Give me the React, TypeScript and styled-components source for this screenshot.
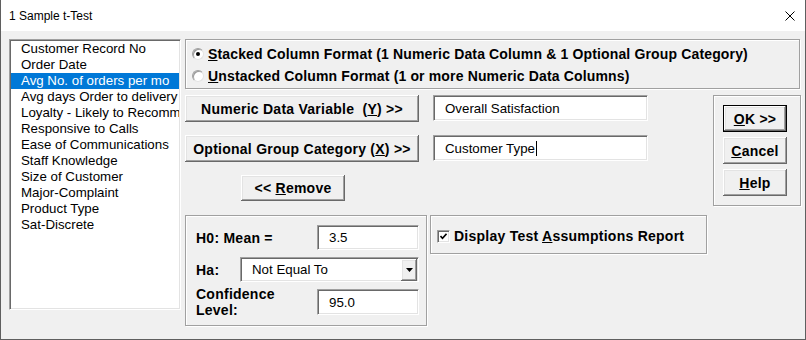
import React from "react";
import styled, { createGlobalStyle } from "styled-components";

const GlobalStyle = createGlobalStyle`
  html, body { margin: 0; padding: 0; background: #f0f0f0; }
  body { font-family: "Liberation Sans", Arial, sans-serif; color: #000; }
  * { box-sizing: border-box; }
`;

const Window = styled.div`
  width: 806px;
  height: 340px;
  display: flex;
  flex-direction: column;
  background: #f0f0f0;
  border: 1px solid #5f5f5f;
  border-top: none;
  overflow: hidden;
`;

const TitleBar = styled.div`
  flex: none;
  height: 31px;
  background: #fff;
  display: flex;
  align-items: center;
  justify-content: space-between;
  padding-left: 8px;
  font-size: 12px;
`;

const CloseBox = styled.div`
  width: 30px;
  height: 31px;
  display: flex;
  align-items: center;
  justify-content: center;
`;

const Body = styled.div`
  flex: 1;
  display: flex;
  padding: 8px 0 0 8px;
  gap: 4px;
`;

const ListBox = styled.div`
  flex: none;
  width: 172px;
  height: 271px;
  background: #fff;
  border-style: solid;
  border-width: 1px;
  border-color: #a0a0a0 #fff #fff #a0a0a0;
  box-shadow: inset 1px 1px #696969, inset -1px -1px #e3e3e3;
  padding: 1px;
`;

const ListItem = styled.div<{ $selected?: boolean }>`
  height: 16px;
  line-height: 16px;
  padding-left: 10px;
  font-size: 13.3px;
  white-space: nowrap;
  overflow: hidden;
  background: ${(p) => (p.$selected ? "#0078d7" : "transparent")};
  color: ${(p) => (p.$selected ? "#fff" : "#000")};
`;

const RightArea = styled.div`
  display: flex;
  flex-direction: column;
  width: 616px;
`;

const GroupBox = styled.div<{ $w: number; $h: number }>`
  width: ${(p) => p.$w}px;
  height: ${(p) => p.$h}px;
  border: 1px solid #a0a0a0;
  box-shadow: inset 1px 1px #fff, 1px 1px #fff;
`;

const boldText = `
  font-size: 14px;
  font-weight: bold;
  letter-spacing: 0.25px;
`;

const RadioGroup = styled(GroupBox)`
  display: flex;
  flex-direction: column;
  padding: 3px 0 0 6px;
`;

const OptionRow = styled.div`
  height: 22px;
  display: flex;
  align-items: center;
  gap: 4px;
  ${boldText}
  letter-spacing: 0.15px;
  white-space: nowrap;
`;

const RadioDot = styled.span<{ $on?: boolean }>`
  flex: none;
  width: 12px;
  height: 12px;
  border-radius: 50%;
  background: #fff;
  border: 1px solid;
  border-color: #a0a0a0 #e3e3e3 #e3e3e3 #a0a0a0;
  box-shadow: inset 1px 1px #9a9a9a;
  display: inline-flex;
  align-items: center;
  justify-content: center;
  &::after {
    content: "";
    width: 4px;
    height: 4px;
    border-radius: 50%;
    background: ${(p) => (p.$on ? "#000" : "transparent")};
  }
`;

const MiddleRow = styled.div`
  display: flex;
  align-items: flex-start;
  margin-top: 6px;
`;

const VarColumn = styled.div`
  width: 463px;
  display: flex;
  flex-direction: column;
  gap: 13px;
`;

const VarRow = styled.div`
  display: flex;
  align-items: flex-start;
  gap: 14px;
`;

const PushButton = styled.div<{ $w: number; $h?: number; $default?: boolean; $indent?: number }>`
  width: ${(p) => p.$w}px;
  height: ${(p) => p.$h ?? 27}px;
  margin-left: ${(p) => p.$indent ?? 0}px;
  background: #f0f0f0;
  ${boldText}
  display: flex;
  align-items: center;
  justify-content: center;
  white-space: pre;
  border: ${(p) => (p.$default ? "1px solid #000" : "none")};
  box-shadow: inset -1px -1px #696969, inset 1px 1px #fff,
    inset -2px -2px #a0a0a0, inset 2px 2px #e3e3e3;
`;

const TextField = styled.div<{ $w: number; $h?: number }>`
  width: ${(p) => p.$w}px;
  height: ${(p) => p.$h ?? 26}px;
  background: #fff;
  border-style: solid;
  border-width: 1px;
  border-color: #a0a0a0 #fff #fff #a0a0a0;
  box-shadow: inset 1px 1px #696969, inset -1px -1px #e3e3e3;
  padding-left: 11px;
  display: flex;
  align-items: center;
  font-size: 13.3px;
  white-space: nowrap;
`;

const Caret = styled.span`
  display: inline-block;
  width: 1px;
  height: 15px;
  background: #000;
  margin-left: 1px;
`;

const ActionGroup = styled(GroupBox)`
  margin-left: 65px;
  padding: 9px 0 0 9px;
  display: flex;
  flex-direction: column;
  gap: 5px;
`;

const BottomRow = styled.div`
  display: flex;
  align-items: flex-start;
  gap: 3px;
  margin-top: 9px;
`;

const ParamGroup = styled(GroupBox)`
  padding: 9px 7px 0 10px;
  display: flex;
  flex-direction: column;
  gap: 7px;
`;

const ParamRow = styled.div<{ $h?: number }>`
  height: ${(p) => p.$h ?? 25}px;
  display: flex;
  align-items: center;
  justify-content: space-between;
`;

const ParamLabel = styled.div`
  ${boldText}
  line-height: 16px;
`;

const Combo = styled(TextField)`
  padding-right: 1px;
  justify-content: space-between;
`;

const ComboButton = styled.div`
  width: 16px;
  height: 22px;
  background: #f0f0f0;
  box-shadow: inset -1px -1px #696969, inset 1px 1px #fff,
    inset -2px -2px #a0a0a0, inset 2px 2px #e3e3e3;
  display: flex;
  align-items: center;
  justify-content: center;
`;

const CheckGroup = styled(GroupBox)`
  display: flex;
  align-items: center;
  padding: 3px 0 0 6px;
  gap: 4px;
  ${boldText}
  white-space: nowrap;
`;

const CheckBox = styled.span`
  flex: none;
  width: 13px;
  height: 13px;
  background: #fff;
  border: 1px solid;
  border-color: #a0a0a0 #fff #fff #a0a0a0;
  box-shadow: inset 1px 1px #696969, inset -1px -1px #e3e3e3;
  display: inline-flex;
  align-items: center;
  justify-content: center;
`;

const items = [
  "Customer Record No",
  "Order Date",
  "Avg No. of orders per mo",
  "Avg days Order to delivery",
  "Loyalty - Likely to Recommend",
  "Responsive to Calls",
  "Ease of Communications",
  "Staff Knowledge",
  "Size of Customer",
  "Major-Complaint",
  "Product Type",
  "Sat-Discrete",
];

export default function App() {
  return (
    <>
      <GlobalStyle />
      <Window>
        <TitleBar>
          <span>1 Sample t-Test</span>
          <CloseBox>
            <svg width="10" height="10" viewBox="0 0 10 10">
              <path d="M0.5 0.5 L9.5 9.5 M9.5 0.5 L0.5 9.5" stroke="#000" strokeWidth="1" />
            </svg>
          </CloseBox>
        </TitleBar>
        <Body>
          <ListBox>
            {items.map((it, i) => (
              <ListItem key={it} $selected={i === 2}>
                {it}
              </ListItem>
            ))}
          </ListBox>
          <RightArea>
            <RadioGroup $w={615} $h={50}>
              <OptionRow>
                <RadioDot $on />
                <span>
                  <u>S</u>tacked Column Format (1 Numeric Data Column &amp; 1 Optional Group Category)
                </span>
              </OptionRow>
              <OptionRow>
                <RadioDot />
                <span>
                  <u>U</u>nstacked Column Format (1 or more Numeric Data Columns)
                </span>
              </OptionRow>
            </RadioGroup>
            <MiddleRow>
              <VarColumn>
                <VarRow>
                  <PushButton $w={234}>
                    Numeric Data Variable  (<u>Y</u>) &gt;&gt;
                  </PushButton>
                  <TextField $w={215}>Overall Satisfaction</TextField>
                </VarRow>
                <VarRow>
                  <PushButton $w={234}>
                    Optional Group Category (<u>X</u>) &gt;&gt;
                  </PushButton>
                  <TextField $w={215}>
                    Customer Type
                    <Caret />
                  </TextField>
                </VarRow>
                <PushButton $w={104} $h={26} $indent={56}>
                  &lt;&lt; <u>R</u>emove
                </PushButton>
              </VarColumn>
              <ActionGroup $w={88} $h={111}>
                <PushButton $w={64} $default>
                  <u>O</u>K &gt;&gt;
                </PushButton>
                <PushButton $w={64}>
                  <u>C</u>ancel
                </PushButton>
                <PushButton $w={64}>
                  <u>H</u>elp
                </PushButton>
              </ActionGroup>
            </MiddleRow>
            <BottomRow>
              <ParamGroup $w={242} $h={111}>
                <ParamRow>
                  <ParamLabel>H0: Mean =</ParamLabel>
                  <TextField $w={102} $h={25}>3.5</TextField>
                </ParamRow>
                <ParamRow>
                  <ParamLabel>Ha:</ParamLabel>
                  <Combo $w={179} $h={25}>
                    <span>Not Equal To</span>
                    <ComboButton>
                      <svg width="7" height="4" viewBox="0 0 7 4">
                        <path d="M0 0 H7 L3.5 4 Z" fill="#000" />
                      </svg>
                    </ComboButton>
                  </Combo>
                </ParamRow>
                <ParamRow $h={26}>
                  <ParamLabel>
                    Confidence
                    <br />
                    Level:
                  </ParamLabel>
                  <TextField $w={102}>95.0</TextField>
                </ParamRow>
              </ParamGroup>
              <CheckGroup $w={277} $h={39}>
                <CheckBox>
                  <svg width="7" height="7" viewBox="0 0 7 7">
                    <path d="M0.5 3 L2.5 5.2 L6.5 0.8" stroke="#000" strokeWidth="1.6" fill="none" />
                  </svg>
                </CheckBox>
                <span>
                  Display Test <u>A</u>ssumptions Report
                </span>
              </CheckGroup>
            </BottomRow>
          </RightArea>
        </Body>
      </Window>
    </>
  );
}
